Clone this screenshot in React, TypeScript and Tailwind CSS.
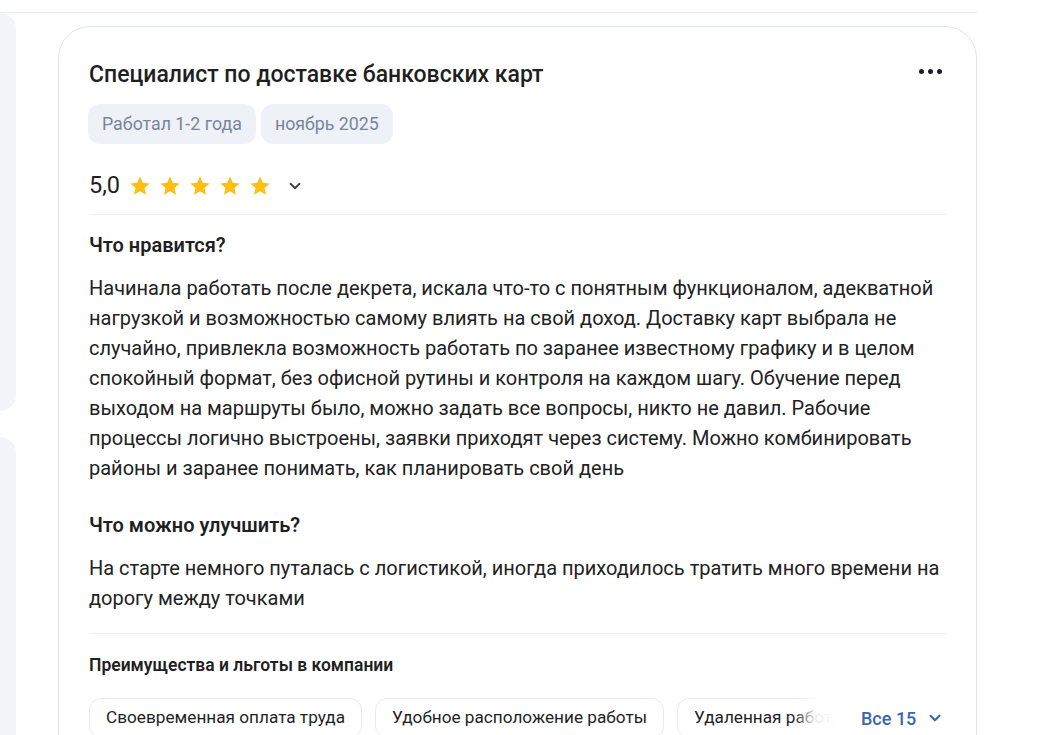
import { ChevronDown } from 'lucide-react';

const benefits = ['Своевременная оплата труда', 'Удобное расположение работы', 'Удаленная работа'];

function Star() {
    return (
        <svg width="22" height="22" viewBox="0 0 24 24" className="fill-[#ffbf0f]">
            <path d="M12 1.6l3.1 6.9 7.4.7-5.6 5 1.7 7.4L12 17.8l-6.6 3.8 1.7-7.4-5.6-5 7.4-.7z" />
        </svg>
    );
}

export default function App() {
    return (
        <div className="min-h-screen bg-white pt-3 font-['Roboto',sans-serif] text-[#1f1f1f] overflow-hidden h-[735px]">
            <div className="w-[977px] border-t border-[#e8ebf1] flex gap-[42px]">
                <div className="w-4 flex flex-col gap-[26px] shrink-0">
                    <div className="h-[398px] bg-[#f3f4f9] rounded-r-2xl" />
                    <div className="h-[400px] bg-[#f3f4f9] rounded-r-2xl" />
                </div>

                <div className="mt-[13px] w-[919px] border border-[#dfe4ec] rounded-[32px] px-[30px] pt-8 pb-8">
                    <div className="flex items-start justify-between">
                        <h2 className="text-[23px] leading-8 font-medium">Специалист по доставке банковских карт</h2>
                        <div className="flex gap-[4px] pr-[4px] mt-[10px]">
                            <span className="w-[5px] h-[5px] rounded-full bg-[#1b1d2b]" />
                            <span className="w-[5px] h-[5px] rounded-full bg-[#1b1d2b]" />
                            <span className="w-[5px] h-[5px] rounded-full bg-[#1b1d2b]" />
                        </div>
                    </div>

                    <div className="flex gap-[5px] mt-[13px] -ml-px">
                        <span className="h-10 px-[14px] flex items-center rounded-xl bg-[#eef1f7] text-[#7b8599] text-[17.8px]">Работал 1-2 года</span>
                        <span className="h-10 px-[14px] flex items-center rounded-xl bg-[#eef1f7] text-[#7b8599] text-[17.8px]">ноябрь 2025</span>
                    </div>

                    <div className="flex items-center h-8 mt-[26px]">
                        <span className="text-[23.5px] mr-[9px]">5,0</span>
                        <div className="flex gap-2">
                            <Star /><Star /><Star /><Star /><Star />
                        </div>
                        <ChevronDown size={18} strokeWidth={2.5} className="ml-[15px] text-[#444]" />
                    </div>

                    <div className="mt-3 border-t border-[#eef0f4]" />

                    <h3 className="mt-[18px] text-[20px] leading-6 font-semibold">Что нравится?</h3>
                    <p className="mt-4 text-[20px] leading-[30px] text-[#222]">
                        Начинала работать после декрета, искала что-то с понятным функционалом, адекватной нагрузкой и возможностью самому влиять на свой доход. Доставку карт выбрала не случайно, привлекла возможность работать по заранее известному графику и в целом спокойный формат, без офисной рутины и контроля на каждом шагу. Обучение перед выходом на маршруты было, можно задать все вопросы, никто не давил. Рабочие процессы логично выстроены, заявки приходят через систему. Можно комбинировать районы и заранее понимать, как планировать свой день
                    </p>

                    <h3 className="mt-[30px] text-[20px] leading-6 font-semibold">Что можно улучшить?</h3>
                    <p className="mt-4 text-[20px] leading-[30px] text-[#222]">
                        На старте немного путалась с логистикой, иногда приходилось тратить много времени на дорогу между точками
                    </p>

                    <div className="mt-5 border-t border-[#eef0f4]" />

                    <h4 className="mt-[19px] text-[17.5px] leading-6 font-semibold">Преимущества и льготы в компании</h4>

                    <div className="mt-[21px] flex items-center">
                        <div className="relative w-[748px] shrink-0 overflow-hidden">
                            <div className="flex gap-[13px]">
                                {benefits.map(b => (
                                    <span key={b} className="h-10 px-4 flex items-center shrink-0 whitespace-nowrap rounded-xl border border-[#e8ebf1] text-[17.2px]">{b}</span>
                                ))}
                            </div>
                            <div className="absolute right-0 top-0 h-full w-[44px] bg-gradient-to-l from-white via-white/90 to-transparent" />
                        </div>
                        <button className="ml-6 shrink-0 flex items-center gap-[10px] text-[#3a67ad] font-medium text-[18px]">
                            Все 15
                            <ChevronDown size={18} strokeWidth={2.75} />
                        </button>
                    </div>
                </div>
            </div>
        </div>
    );
}
